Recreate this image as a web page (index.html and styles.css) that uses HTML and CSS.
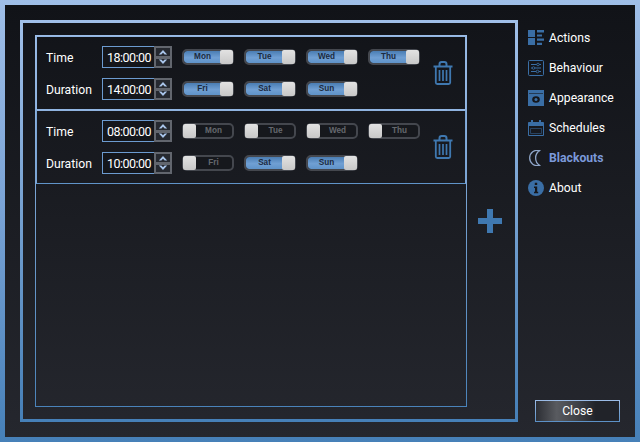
FILE: index.html
```html
<!DOCTYPE html>
<html lang="en">
<head>
<meta charset="utf-8">
<title>Blackouts</title>
<link rel="stylesheet" href="styles.css">
</head>
<body>
<svg class="defs" width="0" height="0" aria-hidden="true">
  <symbol id="trash" viewBox="0 0 20 24">
    <path d="M0.5 5.5H19.5M6.5 4.5V3.2A2.2 2.2 0 0 1 8.7 1H11.3A2.2 2.2 0 0 1 13.5 3.2V4.5" fill="none" stroke="currentColor" stroke-width="2"/>
    <path d="M2.8 6V21.5A1.5 1.5 0 0 0 4.3 23H15.7A1.5 1.5 0 0 0 17.2 21.5V6" fill="none" stroke="currentColor" stroke-width="1.8"/>
    <path d="M6.5 9V20M10 9V20M13.5 9V20" fill="none" stroke="currentColor" stroke-width="1.7"/>
  </symbol>
  <symbol id="up" viewBox="0 0 12 7"><path d="M1 6.500L6 1L11 6.500H8L6 4.500L4 6.500Z" fill="currentColor"/></symbol>
  <symbol id="down" viewBox="0 0 12 7"><path d="M1 0.500L6 6L11 0.500H8L6 2.500L4 0.500Z" fill="currentColor"/></symbol>
</svg>
<div class="window">
  <div class="surface">
    <section class="frame">
      <div class="list">
        <div class="row row-a">
          <div class="fields">
            <span class="label">Time</span>
            <div class="spin"><span class="value">18:00:00</span><span class="arrows"><span class="arrow"><svg class="chev"><use href="#up"/></svg></span><span class="arrow"><svg class="chev"><use href="#down"/></svg></span></span></div>
            <span class="label">Duration</span>
            <div class="spin"><span class="value">14:00:00</span><span class="arrows"><span class="arrow"><svg class="chev"><use href="#up"/></svg></span><span class="arrow"><svg class="chev"><use href="#down"/></svg></span></span></div>
          </div>
          <div class="days">
            <div class="cell"><span class="toggle on"><span class="day">Mon</span><span class="thumb"></span></span></div>
            <div class="cell"><span class="toggle on"><span class="day">Tue</span><span class="thumb"></span></span></div>
            <div class="cell"><span class="toggle on"><span class="day">Wed</span><span class="thumb"></span></span></div>
            <div class="cell"><span class="toggle on"><span class="day">Thu</span><span class="thumb"></span></span></div>
            <div class="cell"><span class="toggle on"><span class="day">Fri</span><span class="thumb"></span></span></div>
            <div class="cell"><span class="toggle on"><span class="day">Sat</span><span class="thumb"></span></span></div>
            <div class="cell"><span class="toggle on"><span class="day">Sun</span><span class="thumb"></span></span></div>
          </div>
          <svg class="trash"><use href="#trash"/></svg>
        </div>
        <div class="row row-b">
          <div class="fields">
            <span class="label">Time</span>
            <div class="spin"><span class="value">08:00:00</span><span class="arrows"><span class="arrow"><svg class="chev"><use href="#up"/></svg></span><span class="arrow"><svg class="chev"><use href="#down"/></svg></span></span></div>
            <span class="label">Duration</span>
            <div class="spin"><span class="value">10:00:00</span><span class="arrows"><span class="arrow"><svg class="chev"><use href="#up"/></svg></span><span class="arrow"><svg class="chev"><use href="#down"/></svg></span></span></div>
          </div>
          <div class="days">
            <div class="cell"><span class="toggle off"><span class="thumb"></span><span class="day">Mon</span></span></div>
            <div class="cell"><span class="toggle off"><span class="thumb"></span><span class="day">Tue</span></span></div>
            <div class="cell"><span class="toggle off"><span class="thumb"></span><span class="day">Wed</span></span></div>
            <div class="cell"><span class="toggle off"><span class="thumb"></span><span class="day">Thu</span></span></div>
            <div class="cell"><span class="toggle off"><span class="thumb"></span><span class="day">Fri</span></span></div>
            <div class="cell"><span class="toggle on"><span class="day">Sat</span><span class="thumb"></span></span></div>
            <div class="cell"><span class="toggle on"><span class="day">Sun</span><span class="thumb"></span></span></div>
          </div>
          <svg class="trash"><use href="#trash"/></svg>
        </div>
      </div>
      <div class="add">
        <svg class="plus" viewBox="0 0 24 24"><path d="M9 0H15V9H24V15H15V24H9V15H0V9H9Z" fill="currentColor"/></svg>
      </div>
    </section>
    <aside class="side">
      <nav class="menu">
        <a class="item">
          <svg class="icon" viewBox="0 0 16 16"><path d="M0 0H7V7H0ZM0 8H7V15H0ZM9 0H16V2.400H9ZM9 4.400H14V6.600H9ZM9 8.600H16V10.800H9ZM9 12.800H14V15H9Z" fill="currentColor"/></svg>
          <span>Actions</span>
        </a>
        <a class="item">
          <svg class="icon" viewBox="0 0 16 16"><rect x=".5" y=".5" width="15" height="15" rx="1" fill="none" stroke="currentColor"/><path d="M3 4.500H13M3 8H13M3 11.500H13" stroke="currentColor" fill="none"/><circle cx="10" cy="4.500" r="1.300" fill="#15171c" stroke="currentColor" stroke-width=".8"/><circle cx="5.500" cy="8" r="1.300" fill="#15171c" stroke="currentColor" stroke-width=".8"/><circle cx="9.500" cy="11.500" r="1.300" fill="#15171c" stroke="currentColor" stroke-width=".8"/></svg>
          <span>Behaviour</span>
        </a>
        <a class="item">
          <svg class="icon" viewBox="0 0 16 16"><path d="M0 0H16V16H0Z" fill="currentColor"/><path d="M1 3.500H15" stroke="#15171c" stroke-opacity=".6"/><ellipse cx="8" cy="9.500" rx="3.800" ry="3.200" fill="#15171c"/><circle cx="8" cy="9.500" r="1.500" fill="currentColor"/></svg>
          <span>Appearance</span>
        </a>
        <a class="item">
          <svg class="icon" viewBox="0 0 16 16"><path d="M.5 2.500H15.500V15.500H.5Z" fill="none" stroke="currentColor"/><path d="M.5 2.500H15.500V6H.5ZM3 0H5V3H3ZM11 0H13V3H11Z" fill="currentColor"/><path d="M2.500 8.500H13.500V13.500H2.500Z" fill="none" stroke="currentColor" stroke-opacity=".5"/></svg>
          <span>Schedules</span>
        </a>
        <a class="item item-active">
          <svg class="icon moon" viewBox="0 0 16 16"><path d="M11.500 0.600A7.700 7.700 0 1 0 11.500 15.400A9 9 0 0 1 11.500 0.600Z" fill="none" stroke="currentColor" stroke-width="1.300"/></svg>
          <span>Blackouts</span>
        </a>
        <a class="item">
          <svg class="icon" viewBox="0 0 16 16"><circle cx="8" cy="8" r="8" fill="currentColor"/><path d="M6.800 2.800H9.200V5H6.800ZM6 6.500H9.200V11.800H10.200V13.300H6V11.800H7V8H6Z" fill="#15171c"/></svg>
          <span>About</span>
        </a>
      </nav>
      <button class="close" type="button">Close</button>
    </aside>
  </div>
</div>
</body>
</html>
```

FILE: styles.css
```css
* { box-sizing: border-box; }
html, body { margin: 0; height: 100%; }
body { font-family: Roboto, "Open Sans", sans-serif; color: #fff; background: #111318; overflow: hidden; }
.defs { position: absolute; }
.window {
  width: 640px; height: 442px; padding: 5px;
  background: linear-gradient(180deg, #a0bfe8 0%, #7ba4d6 45%, #4680b8 100%);
}
.surface {
  display: flex; height: 100%; padding: 15px 0 15px 15px;
  background: linear-gradient(180deg, #111318 0%, #25272e 100%);
}
.frame {
  display: flex; width: 498px; height: 402px; padding: 12px 0 12px 12px;
  border: 3px solid; border-image: linear-gradient(180deg, #a0bfe8, #4680b8) 1;
}
.list {
  width: 432px; height: 372px;
  border: 1px solid; border-image: linear-gradient(180deg, #9cbce6, #4a83ba) 1;
}
.row {
  display: flex; align-items: center; height: 74px; padding-left: 9px; border: 1px solid;
}
.row-a { border-color: #92b6e3; }
.row-b { border-color: #8fb2df #7aa5d6 #6094c9; }
.fields { display: grid; grid-template-columns: 56px 70px; grid-auto-rows: 22px; row-gap: 10px; align-items: center; }
.label { font-size: 12.2px; line-height: 22px; padding-top: 1px; }
.spin { display: flex; height: 22px; border: 1px solid #6c9bd0; background: #14161b; }
.value { width: 51px; padding: 1px 0 0 1px; font-size: 12.5px; line-height: 20px; text-align: center; letter-spacing: -0.5px; white-space: nowrap; }
.arrows { display: flex; flex-direction: column; width: 18px; margin: -1px -1px -1px 0; }
.arrow { display: flex; align-items: center; justify-content: center; flex: 1; background: #262930; border: 2px solid #62666e; }
.arrow + .arrow { margin-top: -1px; }
.chev { display: block; width: 10px; height: 6px; color: #a9c5ea; }
.days { display: grid; grid-template-columns: repeat(4, 52px); grid-auto-rows: 22px; gap: 10px; margin-left: 10px; }
.cell { display: flex; align-items: center; }
.toggle {
  display: flex; align-items: center; justify-content: space-between; width: 52px; height: 16px;
  border: 2px solid #44474e; border-radius: 5px;
  font-size: 8.2px; font-weight: 700; font-family: "Liberation Sans", sans-serif;
}
.on { background: linear-gradient(180deg, #4a7db3 0%, #709fd3 55%, #5f93c9 100%) padding-box; color: #1b2a40; }
.off { background: #16181d; color: #65686e; }
.day { flex: 1; text-align: center; line-height: 12px; }
.thumb { flex: none; width: 13px; height: 14px; margin: 0 -1px; border-radius: 2px; background: linear-gradient(180deg, #e2e2e2, #c8c8c8); }
.trash { width: 20px; height: 24px; margin-left: 13px; color: #3f78b0; }
.add { display: flex; align-items: center; justify-content: center; width: 46px; }
.plus { width: 24px; height: 24px; color: #3f78b0; }
.side { display: flex; flex-direction: column; justify-content: space-between; flex: 1; padding: 6px 15px 0 10px; }
.menu { display: flex; flex-direction: column; gap: 6px; }
.item { display: flex; align-items: center; gap: 5px; height: 24px; font-size: 12.2px; }
.icon { width: 16px; height: 16px; flex: none; color: #3a6ea5; }
.moon { color: #8ea5c8; }
.item-active { color: #7b99da; font-weight: 700; }
.close {
  align-self: flex-end; width: 85px; height: 22px; padding: 0; margin: 0;
  border: 1px solid; border-image: linear-gradient(180deg, #9cbce6, #5b90c6) 1;
  background: linear-gradient(90deg, #2c2e34 0%, #595b60 25%, #3f4146 50%, #212329 72%, #212329 100%);
  color: #fff; font: 12.2px Roboto, sans-serif;
}
```
